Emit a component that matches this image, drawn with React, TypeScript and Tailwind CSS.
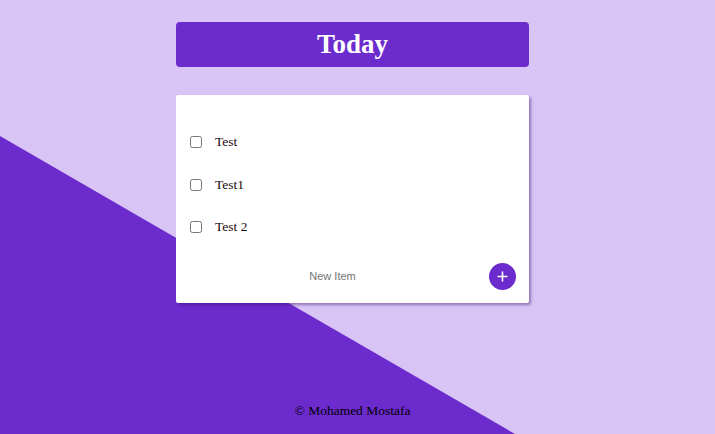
export default function App() {
  const items = ["Test", "Test1", "Test 2"];

  return (
    <div className="relative h-[434px] w-[715px] overflow-hidden bg-[#d9c5f5]">
      {/* diagonal background */}
      <div className="absolute inset-0 bg-[#6c2bcd] [clip-path:polygon(0_136px,515px_434px,0_434px)]"></div>

      <div className="relative flex w-[705px] flex-col items-center">
        <header className="mt-[22px] flex h-[45px] w-[353px] items-center justify-center rounded-[4px] bg-[#6c2bcd]">
          <h1 className="font-['Liberation_Serif',serif] text-[27px] font-bold leading-none text-white">Today</h1>
        </header>

        <div className="mt-[28px] w-[353px] rounded-[2px] bg-white pt-[26px] pb-[13px] shadow-[2px_2px_3px_rgba(60,20,110,0.45)]">
          <ul>
            {items.map((item) => (
              <li key={item} className="flex h-[42.5px] items-center pl-[14px]">
                <input type="checkbox" className="m-0 h-[12px] w-[12px]" />
                <span className="ml-[13px] font-['Liberation_Serif',serif] text-[13.5px] text-[#1a0a0a]">{item}</span>
              </li>
            ))}
          </ul>
          <form className="mt-[14px] flex items-center pl-[14px] pr-[13px]">
            <input
              type="text"
              placeholder="New Item"
              className="mr-[14px] flex-1 bg-transparent text-center font-['Liberation_Sans',sans-serif] text-[11px] outline-none placeholder:text-[#757575]"
            />
            <button type="button" className="flex h-[27px] w-[27px] items-center justify-center rounded-full bg-[#6c2bcd]">
              <svg width="11" height="11" viewBox="0 0 11 11">
                <path d="M5.5 0.5v10M0.5 5.5h10" stroke="white" strokeWidth="1.6" />
              </svg>
            </button>
          </form>
        </div>

        <footer className="mt-[98px] font-['Liberation_Serif',serif] text-[13.5px] text-black">© Mohamed Mostafa</footer>
      </div>
    </div>
  );
}
